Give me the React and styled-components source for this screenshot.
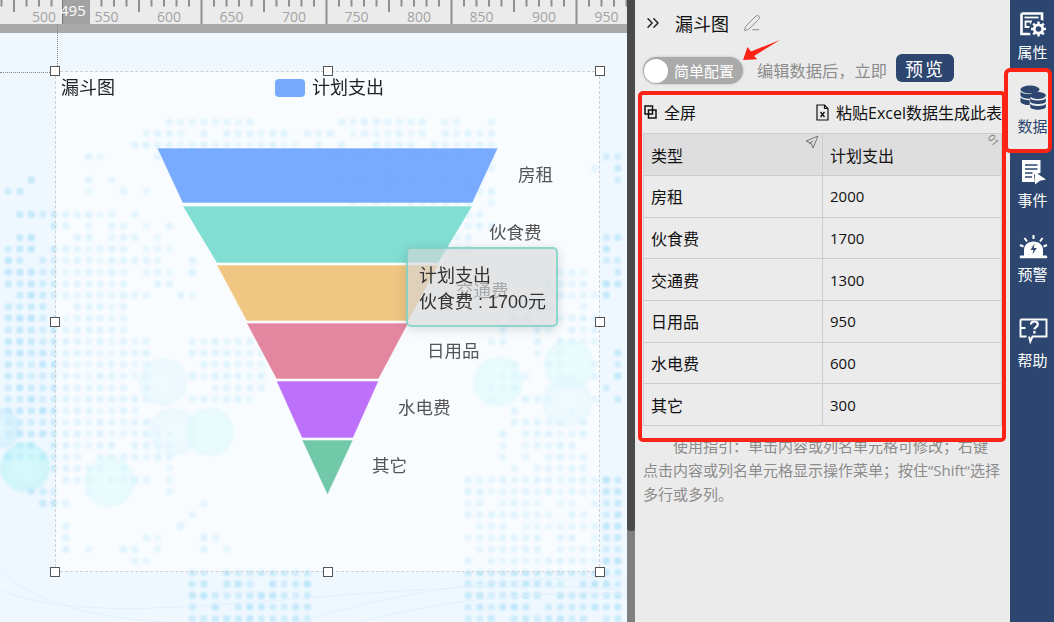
import React from 'react';
import styled, { createGlobalStyle } from 'styled-components';
import { ChevronsRight, PenLine } from 'lucide-react';

const CJK = '"Noto Sans CJK SC", sans-serif';
const ARIAL_CJK = '"Liberation Sans", "Noto Sans CJK SC", sans-serif';
const OPEN_CJK = '"Open Sans", "Noto Sans CJK SC", sans-serif';
const NAVY = '#2c4670';
const RED = '#fb2216';

const GlobalStyle = createGlobalStyle`
  html, body {
    margin: 0;
    padding: 0;
    height: 100%;
    overflow: hidden;
    background: #ebebeb;
  }
  #root {
    height: 100%;
  }
`;

const Page = styled.div`
  display: flex;
  width: 1054px;
  height: 622px;
  overflow: hidden;
  font-family: ${CJK};
`;

/* ---------- canvas ---------- */

const Canvas = styled.div`
  position: relative;
  flex: 0 0 627px;
  height: 622px;
  overflow: hidden;
  display: flex;
  flex-direction: column;
  background: #f0f8ff;
`;

const Ruler = styled.div`
  position: relative;
  flex: 0 0 24px;
  background: #ebebeb;
  svg {
    display: block;
    overflow: visible;
  }
`;

const RulerBand = styled.div`
  flex: 0 0 9px;
  background: #aaaaaa;
`;

const RulerMark = styled.div`
  position: absolute;
  left: 62px;
  top: 0;
  width: 28px;
  height: 24px;
  background: #a2a2a2;
  border-left: 1px solid #777;
  box-sizing: border-box;
  color: #fff;
  font: 15px/21px "Open Sans", sans-serif;
  text-indent: -3px;
`;

const Backdrop = styled.svg`
  position: absolute;
  left: 0;
  top: 33px;
`;

const GuideV = styled.div`
  position: absolute;
  left: 57px;
  top: 24px;
  height: 48px;
  border-left: 1px dotted #888;
`;

const GuideH = styled.div`
  position: absolute;
  left: 0;
  top: 72px;
  width: 56px;
  border-top: 1px dotted #888;
`;

const SelectBox = styled.div`
  position: absolute;
  left: 55px;
  top: 71px;
  width: 545px;
  height: 501px;
  border: 1px dashed #cfcfcf;
  box-sizing: border-box;
  background: rgba(255, 255, 255, 0.5);
`;

const Handle = styled.div`
  position: absolute;
  left: ${p => p.$x - 5}px;
  top: ${p => p.$y - 5}px;
  width: 10px;
  height: 10px;
  box-sizing: border-box;
  background: #fff;
  border: 1px solid #555;
`;

const ChartTitle = styled.div`
  position: absolute;
  left: 61px;
  top: 74px;
  font-size: 18px;
  line-height: 24px;
  color: #222;
`;

const LegendSwatch = styled.div`
  position: absolute;
  left: 275px;
  top: 79px;
  width: 30px;
  height: 18px;
  border-radius: 4px;
  background: #78a9fd;
`;

const LegendText = styled.div`
  position: absolute;
  left: 312px;
  top: 74px;
  font-size: 18px;
  line-height: 24px;
  color: #222;
`;

const Funnel = styled.svg`
  position: absolute;
  left: 150px;
  top: 140px;
`;

const SliceLabel = styled.div`
  position: absolute;
  left: ${p => p.$x}px;
  top: ${p => p.$y - 12}px;
  font-size: 17.5px;
  line-height: 24px;
  color: #555;
`;

const Tooltip = styled.div`
  position: absolute;
  left: 406px;
  top: 247px;
  width: 152px;
  height: 80px;
  box-sizing: border-box;
  padding: 14px 11px;
  border: 2px solid rgba(111, 210, 194, 0.75);
  border-radius: 5px;
  background: rgba(213, 214, 216, 0.64);
  box-shadow: 0 2px 12px rgba(0, 0, 0, 0.14);
  font-family: ${ARIAL_CJK};
  font-size: 18px;
  line-height: 26px;
  color: #333;
  white-space: nowrap;
`;

/* ---------- scrollbar ---------- */

const ScrollTrack = styled.div`
  flex: 0 0 8px;
  height: 622px;
  background: #808080;
`;

const ScrollThumb = styled.div`
  height: 531px;
  background: #4a4a4a;
  border-radius: 0 0 3px 3px;
`;

/* ---------- panel ---------- */

const Panel = styled.div`
  position: relative;
  flex: 0 0 374px;
  height: 622px;
  box-sizing: border-box;
  padding: 10px 8px 0;
  background: #ebebeb;
`;

const TitleRow = styled.div`
  display: flex;
  align-items: center;
  height: 26px;
  color: #222;
`;

const PanelTitle = styled.span`
  margin-left: 12px;
  font-size: 18px;
  color: #111;
`;

const EditIcon = styled(PenLine)`
  margin-left: 14px;
  color: #8a8a8a;
`;

const ConfigRow = styled.div`
  display: flex;
  align-items: center;
  margin-top: 18px;
  height: 28px;
`;

const Toggle = styled.div`
  display: flex;
  align-items: center;
  flex: 0 0 100px;
  height: 27px;
  margin-top: 5px;
  border-radius: 14px;
  background: #aaaaaa;
  box-shadow: 0 0 3px rgba(0, 0, 0, 0.2);
  color: #fff;
  font-size: 15px;
  white-space: nowrap;
`;

const ToggleKnob = styled.span`
  flex: 0 0 24px;
  height: 24px;
  margin: 0 6px 0 1px;
  border-radius: 50%;
  background: #fff;
`;

const ConfigHint = styled.span`
  margin: 3px 0 0 14px;
  font-size: 16.25px;
  color: #8c8c8c;
  white-space: nowrap;
`;

const PreviewButton = styled.button`
  flex: 0 0 58px;
  height: 28px;
  margin-left: 9px;
  padding: 0;
  border: 0;
  border-radius: 6px;
  background: ${NAVY};
  color: #fff;
  font-family: ${CJK};
  font-size: 18px;
  letter-spacing: 2px;
  line-height: 28px;
`;

const DataToolbar = styled.div`
  display: flex;
  align-items: center;
  justify-content: space-between;
  height: 26px;
  margin-top: 17px;
  font-family: ${OPEN_CJK};
  font-size: 16px;
  color: #111;
  white-space: nowrap;
`;

const ToolButton = styled.span`
  display: inline-flex;
  align-items: center;
  gap: 7px;
  margin-left: ${p => p.$indent || 0}px;
`;

const DataTable = styled.table`
  width: 358px;
  margin-top: 8px;
  border-collapse: collapse;
  table-layout: fixed;
  font-family: ${OPEN_CJK};
  font-size: 16px;
  color: #111;
`;

const HeadCell = styled.th`
  position: relative;
  height: 41px;
  padding: 0 7px;
  border: 1px solid #cccccc;
  background: #dedede;
  font-weight: 400;
  text-align: left;
`;

const BodyCell = styled.td`
  height: 40.7px;
  padding: 0 7px;
  border: 1px solid #cccccc;
  font-size: ${p => (p.$num ? '15px' : '16px')};
`;

const SortIcon = styled.svg`
  position: absolute;
  right: 3px;
  top: 1px;
`;

const IndexBadge = styled.span`
  position: absolute;
  right: 2px;
  top: 0;
  font-size: 10px;
  line-height: 12px;
  color: #777;
  transform: rotate(55deg);
`;

const HelpText = styled.p`
  margin: 8px 0 0;
  width: 358px;
  font-family: ${OPEN_CJK};
  font-size: 15px;
  line-height: 24px;
  color: #8c8c8c;
  text-indent: 30px;
`;

const RedFrame = styled.div`
  position: absolute;
  left: 3px;
  top: 91px;
  width: 368px;
  height: 351px;
  box-sizing: border-box;
  border: 4px solid ${RED};
  border-radius: 5px;
`;

const RedArrow = styled.svg`
  position: absolute;
  left: 105px;
  top: 36px;
`;

/* ---------- right nav ---------- */

const Nav = styled.nav`
  flex: 0 0 45px;
  height: 622px;
  box-sizing: border-box;
  padding-top: 8px;
  background: ${NAVY};
`;

const NavItem = styled.div`
  position: relative;
  display: flex;
  flex-direction: column;
  align-items: center;
  height: 74px;
  margin-top: ${p => p.$gap || 0}px;
  color: ${p => (p.$active ? NAVY : '#fff')};
  &::before {
    content: '';
    display: ${p => (p.$active ? 'block' : 'none')};
    position: absolute;
    left: -6px;
    top: -14px;
    width: 48px;
    height: 85px;
    box-sizing: border-box;
    border: 4px solid ${RED};
    border-radius: 6px;
    background: #ebebeb;
  }
`;

const NavIcon = styled.svg`
  position: relative;
  margin-top: 2px;
`;

const NavLabel = styled.span`
  position: relative;
  margin-top: 4px;
  font-size: 15px;
  line-height: 20px;
  white-space: nowrap;
`;

/* ---------- drawings ---------- */

const PropertyIcon = () =>
  <NavIcon width="30" height="28" viewBox="0 0 30 28">
    <path d="M3.500 3.500h20.500v8M3.500 3.500v20.500h9" fill="none" stroke="currentColor" strokeWidth="2.600" />
    <path d="M6.500 7.500h14" stroke="currentColor" strokeWidth="1.800" />
    <path d="M7.500 11.500h5.500v5.500H7.500z" fill="none" stroke="currentColor" strokeWidth="1.800" />
    <circle cx="20.500" cy="19" r="9.500" fill={NAVY} />
    <circle cx="20.500" cy="19" r="4.200" fill="none" stroke="currentColor" strokeWidth="2.800" />
    <path d="M20.500 11.500v3M20.500 23.500v3M13 19h3M25 19h3M15.200 13.700l2 2M23.800 22.300l2 2M25.800 13.700l-2 2M17.200 22.300l-2 2" stroke="currentColor" strokeWidth="2.400" />
  </NavIcon>;

const DataIcon = () =>
  <NavIcon width="30" height="28" viewBox="0 0 30 28">
    <g fill="currentColor">
      <ellipse cx="12" cy="5.500" rx="9.500" ry="4" />
      <path d="M2.500 7.500c1.500 3.500 17.500 3.500 19 0v2.500c-4 .5-8 1.500-9.500 4.700-4.500 0-8.500-.9-9.500-3.200z" />
      <path d="M2.500 13.500c1.500 1.800 5.500 2.800 9.200 2.800v4.800c-4 0-8.200-1.100-9.200-3.100z" />
      <ellipse cx="20" cy="11.500" rx="7.800" ry="3.400" />
      <path d="M12.200 14.200c1.200 3 14.400 3 15.600 0v3.600c-1.200 3-14.400 3-15.600 0z" />
      <path d="M12.200 19.800c1.200 3 14.400 3 15.600 0v3.400c-1.200 3.300-14.400 3.300-15.600 0z" />
    </g>
  </NavIcon>;

const EventIcon = () =>
  <NavIcon width="30" height="28" viewBox="0 0 30 28">
    <path d="M4 2h18.500v13l-6.500 1.500.8 7.500H4z" fill="currentColor" />
    <path d="M7 7h12.500M7 11h12.500M7 15h7.500M7 19h7" stroke={NAVY} strokeWidth="1.600" />
    <path d="M17 14l11 7.500-6 1.200-5 3.800z" fill="currentColor" />
  </NavIcon>;

const AlarmIcon = () =>
  <NavIcon width="30" height="28" viewBox="0 0 30 28">
    <path d="M15.500 3v4M6.500 6l2.500 3.500M24.500 6L22 9.500M2 13l3.500 1.500M29 13l-3.500 1.500" stroke="currentColor" strokeWidth="2" />
    <path d="M6 24v-6c0-5 4-8.500 9.500-8.500S25 13 25 18v6z" fill="currentColor" />
    <path d="M3 23.500h25c.8 0 1.300.6 1.300 1.400s-.5 1.400-1.300 1.400H3c-.8 0-1.300-.6-1.300-1.400s.5-1.400 1.300-1.400z" fill="currentColor" />
    <path d="M16.500 11.500l-4 6.500h3l-1 4.500 4.300-6.500h-3z" fill={NAVY} />
  </NavIcon>;

const HelpIcon = () =>
  <NavIcon width="30" height="28" viewBox="0 0 30 28">
    <path d="M2.500 1.500h26v17H14.500l-2.200 5-1.300-5" fill="none" stroke="currentColor" strokeWidth="1.900" />
    <path d="M2.500 1.500v17h6M2.500 10h5" fill="none" stroke="currentColor" strokeWidth="1.900" />
    <path d="M13 6.500c0-2 1.600-3 3.400-3s3.400 1 3.400 2.900c0 2.800-3.400 2.500-3.400 5.100" fill="none" stroke="currentColor" strokeWidth="2.200" />
    <path d="M16.400 13v2.600" stroke="currentColor" strokeWidth="2.400" />
  </NavIcon>;

const FullscreenIcon = () =>
  <svg width="13" height="14" viewBox="0 0 13 14" fill="none" stroke="#111" strokeWidth="1.500">
    <rect x="1" y="1" width="7.500" height="8" />
    <rect x="4.500" y="5" width="7.500" height="8" />
  </svg>;

const ExcelIcon = () =>
  <svg width="13" height="17" viewBox="0 0 13 17" fill="none" stroke="#111" strokeWidth="1.200">
    <path d="M1 1h7.500L12 4.500V16H1z" />
    <path d="M8.500 1v3.500H12" />
    <path d="M4.500 8l4 5M8.500 8l-4 5" strokeWidth="1.300" />
  </svg>;

// 按 2000 -> 0 的数值生成漏斗每一层的梯形
const slices = [
  { name: '房租', value: 2000, next: 1700, y0: 148, y1: 203, color: '#70a5fd', labelX: 518, labelY: 174 },
  { name: '伙食费', value: 1700, next: 1300, y0: 206, y1: 263, color: '#7adcd0', labelX: 489, labelY: 232 },
  { name: '交通费', value: 1300, next: 950, y0: 265, y1: 321, color: '#eec37b', labelX: 456, labelY: 290 },
  { name: '日用品', value: 950, next: 600, y0: 323, y1: 379, color: '#e17f9b', labelX: 427, labelY: 350 },
  { name: '水电费', value: 600, next: 300, y0: 381, y1: 438, color: '#b968fb', labelX: 398, labelY: 407 },
  { name: '其它', value: 300, next: 0, y0: 440, y1: 495, color: '#68c6a4', labelX: 372, labelY: 465 },
];

const slicePoints = ({ value, next, y0, y1 }) => {
  const cx = 177.5;
  const top = (value / 2000) * 170.5;
  const bottom = (next / 2000) * 170.5;
  return [
    [cx - top, y0 - 140],
    [cx + top, y0 - 140],
    [cx + bottom, y1 - 140],
    [cx - bottom, y1 - 140],
  ].join(' ');
};

const tableRows = [
  ['房租', 2000],
  ['伙食费', 1700],
  ['交通费', 1300],
  ['日用品', 950],
  ['水电费', 600],
  ['其它', 300],
];

const ticks = [];
for (let i = 0; i <= 52; i++) {
  const x = i * 12.5 - 12.5 + 0.5;
  const n = i + 3;
  ticks.push({ x, h: n % 10 === 0 ? 24 : n % 5 === 0 ? 12 : 6.5 });
}

const RulerDrawing = () =>
  <svg width="627" height="24">
    {ticks.map(t =>
      <rect key={t.x} x={t.x} y="0" width="2" height={t.h} fill="#8f8f8f" />
    )}
    {[500, 550, 600, 650, 700, 750, 800, 850, 900, 950].map((v, i) =>
      <text key={v} x={56 + i * 62.5} y="22" textAnchor="end" fontSize="14" fontFamily="Open Sans" fill="#a3a3a3">
        {v}
      </text>
    )}
  </svg>;

// 背景世界地图的点阵: [x0, x1, y0, y1, 保留比例]
const dotRegions = [
  [165, 250, 118, 126, 1],
  [130, 330, 128, 150, 0.85],
  [330, 500, 118, 260, 0.75],
  [85, 160, 150, 200, 0.45],
  [0, 35, 175, 200, 0.7],
  [0, 180, 205, 260, 0.65],
  [0, 125, 260, 300, 0.95],
  [125, 200, 260, 300, 0.6],
  [0, 125, 300, 335, 0.95],
  [190, 262, 335, 405, 0.92],
  [0, 150, 335, 425, 0.97],
  [0, 170, 425, 462, 0.92],
  [40, 170, 462, 482, 0.7],
  [30, 100, 482, 510, 0.6],
  [155, 175, 482, 500, 0.6],
  [60, 100, 510, 550, 0.5],
  [120, 160, 530, 570, 0.5],
  [185, 310, 565, 622, 0.9],
  [180, 240, 500, 560, 0.25],
  [465, 627, 470, 622, 0.9],
  [500, 590, 420, 470, 0.75],
  [490, 627, 340, 420, 0.4],
  [500, 610, 300, 340, 0.55],
  [540, 627, 265, 300, 0.7],
  [585, 627, 150, 180, 0.6],
  [595, 627, 230, 262, 0.7],
];

const pseudo = (a, b) => {
  const v = Math.sin(a * 12.9898 + b * 78.233) * 43758.5453;
  return v - Math.floor(v);
};

const dots = [];
for (let row = 0; row < 46; row++) {
  for (let col = 0; col < 55; col++) {
    const x = 8.3 + col * 11.5;
    const y = 122 + row * 11.55 - 11.55;
    const region = dotRegions.find(r => x >= r[0] && x <= r[1] && y >= r[2] && y <= r[3]);
    if (region && pseudo(col, row) < region[4]) {
      dots.push({ x, y, o: 0.5 + pseudo(row, col) * 0.4 });
    }
  }
}

const blobs = [
  [163, 382, 24, 'blobBlue'],
  [173, 432, 24, 'blobBlue'],
  [210, 432, 24, 'blobCyan'],
  [25, 467, 25, 'blobCyan'],
  [110, 482, 25, 'blobCyan'],
  [0, 428, 20, 'blobBlue'],
  [498, 382, 25, 'blobCyan'],
  [569, 365, 25, 'blobCyan'],
  [567, 402, 25, 'blobBlue'],
];

const BackdropDrawing = () =>
  <Backdrop width="627" height="589" viewBox="0 33 627 589">
    <defs>
      <filter id="soft">
        <feGaussianBlur stdDeviation="0.9" />
      </filter>
      <radialGradient id="blobBlue">
        <stop offset="0" stopColor="#d8f6fd" />
        <stop offset="1" stopColor="#c0e9fa" />
      </radialGradient>
      <radialGradient id="blobCyan">
        <stop offset="0" stopColor="#c4fbfb" />
        <stop offset="1" stopColor="#b4f0f4" />
      </radialGradient>
    </defs>
    <g filter="url(#soft)">
      {dots.map(d =>
        <rect key={d.x + '-' + d.y} x={d.x - 3.5} y={d.y - 3.5} width="7" height="7" rx="2.500" fill="#b6e4f9" opacity={d.o} />
      )}
    </g>
    <g filter="url(#soft)">
      {blobs.map(b =>
        <circle key={b[0] + '-' + b[1]} cx={b[0]} cy={b[1]} r={b[2]} fill={`url(#${b[3]})`} opacity="0.55" />
      )}
    </g>
    <g fill="none" stroke="#e0f0fa" strokeWidth="1">
      <path d="M0 590C120 640 380 570 627 590" />
      <path d="M0 570C40 610 120 620 170 622" />
      <path d="M300 622C400 590 520 575 627 578" />
      <path d="M360 622C440 600 540 590 627 595" />
    </g>
  </Backdrop>;

const handles = [
  [55, 71], [328, 71], [600, 71],
  [55, 322], [600, 322],
  [55, 572], [328, 572], [600, 572],
];

const App = () =>
  <Page>
    <GlobalStyle />
    <Canvas>
      <Ruler>
        <RulerDrawing />
        <RulerMark>495</RulerMark>
      </Ruler>
      <RulerBand />
      <BackdropDrawing />
      <GuideV />
      <GuideH />
      <SelectBox />
      {handles.map(([x, y]) => <Handle key={x + '-' + y} $x={x} $y={y} />)}
      <ChartTitle>漏斗图</ChartTitle>
      <LegendSwatch />
      <LegendText>计划支出</LegendText>
      <Funnel width="355" height="360" viewBox="0 0 355 360">
        {slices.map(s =>
          <polygon key={s.name} points={slicePoints(s)} fill={s.color} fillOpacity="0.94" stroke="#fff" strokeOpacity="0.6" strokeWidth="1" />
        )}
      </Funnel>
      {slices.map(s =>
        <SliceLabel key={s.name} $x={s.labelX} $y={s.labelY}>{s.name}</SliceLabel>
      )}
      <Tooltip>
        计划支出
        <br />
        伙食费 : 1700元
      </Tooltip>
    </Canvas>

    <ScrollTrack>
      <ScrollThumb />
    </ScrollTrack>

    <Panel>
      <TitleRow>
        <ChevronsRight size={20} strokeWidth={1.8} />
        <PanelTitle>漏斗图</PanelTitle>
        <EditIcon size={18} strokeWidth={1.3} />
      </TitleRow>
      <ConfigRow>
        <Toggle>
          <ToggleKnob />
          简单配置
        </Toggle>
        <ConfigHint>编辑数据后，立即</ConfigHint>
        <PreviewButton>预览</PreviewButton>
      </ConfigRow>
      <DataToolbar>
        <ToolButton $indent={1}><FullscreenIcon />全屏</ToolButton>
        <ToolButton><ExcelIcon />粘贴Excel数据生成此表</ToolButton>
      </DataToolbar>
      <DataTable>
        <colgroup>
          <col width="179" />
          <col width="179" />
        </colgroup>
        <thead>
          <tr>
            <HeadCell>
              类型
              <SortIcon width="14" height="14" viewBox="0 0 14 14" fill="none" stroke="#777" strokeWidth="1">
                <path d="M13 1L1 6l5 2 2 5z" />
                <path d="M4 9l4-3" />
              </SortIcon>
            </HeadCell>
            <HeadCell>
              计划支出
              <IndexBadge>01</IndexBadge>
            </HeadCell>
          </tr>
        </thead>
        <tbody>
          {tableRows.map(([name, value]) =>
            <tr key={name}>
              <BodyCell>{name}</BodyCell>
              <BodyCell $num>{value}</BodyCell>
            </tr>
          )}
        </tbody>
      </DataTable>
      <HelpText>
        使用指引：单击内容或列名单元格可修改；右键点击内容或列名单元格显示操作菜单；按住“Shift“选择多行或多列。
      </HelpText>
      <RedFrame />
      <RedArrow width="50" height="30" viewBox="0 0 50 30">
        <path d="M3 24l4.500-13 3.500 4.500L40 4 14 20l3.300 3.300z" fill={RED} />
      </RedArrow>
    </Panel>

    <Nav>
      <NavItem><PropertyIcon /><NavLabel>属性</NavLabel></NavItem>
      <NavItem $active><DataIcon /><NavLabel>数据</NavLabel></NavItem>
      <NavItem><EventIcon /><NavLabel>事件</NavLabel></NavItem>
      <NavItem><AlarmIcon /><NavLabel>预警</NavLabel></NavItem>
      <NavItem $gap={12}><HelpIcon /><NavLabel>帮助</NavLabel></NavItem>
    </Nav>
  </Page>;

export default App;
